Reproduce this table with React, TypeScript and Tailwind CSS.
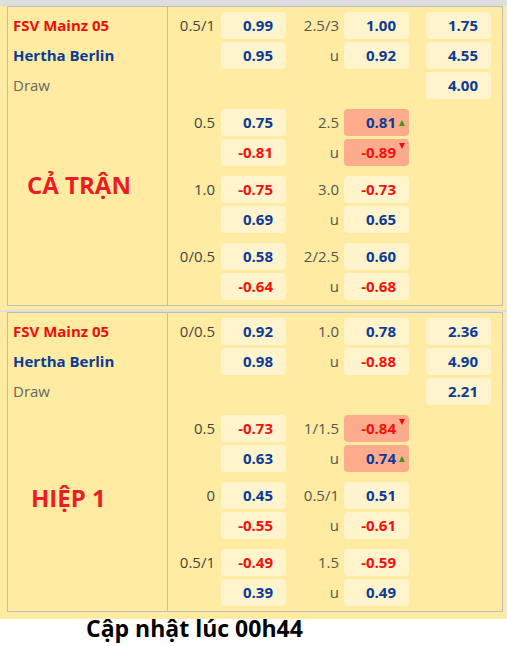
type Cell = { v: string; red?: boolean; hl?: boolean; arrow?: 'up' | 'down' };
type Row = { team?: { name: string; cls: string }; l1?: string; o1?: Cell; l2?: string; o2?: Cell; o3?: string };
type Section = { title: string; titleTop: string; groups: Row[][] };

const sections: Section[] = [
  {
    title: 'CẢ TRẬN',
    titleTop: 'mt-[70px] pl-[19px]',
    groups: [
      [
        { team: { name: 'FSV Mainz 05', cls: 'font-bold text-[#f20d0d]' }, l1: '0.5/1', o1: { v: '0.99' }, l2: '2.5/3', o2: { v: '1.00' }, o3: '1.75' },
        { team: { name: 'Hertha Berlin', cls: 'font-bold text-[#0b3b97]' }, o1: { v: '0.95' }, l2: 'u', o2: { v: '0.92' }, o3: '4.55' },
        { team: { name: 'Draw', cls: 'text-[#666]' }, o3: '4.00' },
      ],
      [
        { l1: '0.5', o1: { v: '0.75' }, l2: '2.5', o2: { v: '0.81', hl: true, arrow: 'up' } },
        { o1: { v: '-0.81', red: true }, l2: 'u', o2: { v: '-0.89', red: true, hl: true, arrow: 'down' } },
      ],
      [
        { l1: '1.0', o1: { v: '-0.75', red: true }, l2: '3.0', o2: { v: '-0.73', red: true } },
        { o1: { v: '0.69' }, l2: 'u', o2: { v: '0.65' } },
      ],
      [
        { l1: '0/0.5', o1: { v: '0.58' }, l2: '2/2.5', o2: { v: '0.60' } },
        { o1: { v: '-0.64', red: true }, l2: 'u', o2: { v: '-0.68', red: true } },
      ],
    ],
  },
  {
    title: 'HIỆP 1',
    titleTop: 'mt-[77px] pl-[23px]',
    groups: [
      [
        { team: { name: 'FSV Mainz 05', cls: 'font-bold text-[#f20d0d]' }, l1: '0/0.5', o1: { v: '0.92' }, l2: '1.0', o2: { v: '0.78' }, o3: '2.36' },
        { team: { name: 'Hertha Berlin', cls: 'font-bold text-[#0b3b97]' }, o1: { v: '0.98' }, l2: 'u', o2: { v: '-0.88', red: true }, o3: '4.90' },
        { team: { name: 'Draw', cls: 'text-[#666]' }, o3: '2.21' },
      ],
      [
        { l1: '0.5', o1: { v: '-0.73', red: true }, l2: '1/1.5', o2: { v: '-0.84', red: true, hl: true, arrow: 'down' } },
        { o1: { v: '0.63' }, l2: 'u', o2: { v: '0.74', hl: true, arrow: 'up' } },
      ],
      [
        { l1: '0', o1: { v: '0.45' }, l2: '0.5/1', o2: { v: '0.51' } },
        { o1: { v: '-0.55', red: true }, l2: 'u', o2: { v: '-0.61', red: true } },
      ],
      [
        { l1: '0.5/1', o1: { v: '-0.49', red: true }, l2: '1.5', o2: { v: '-0.59', red: true } },
        { o1: { v: '0.39' }, l2: 'u', o2: { v: '0.49' } },
      ],
    ],
  },
];

function Odd({ c }: { c?: Cell }) {
  if (!c) return <div className="w-[65px]" />;
  return (
    <div
      className={`relative w-[65px] h-full rounded-[4px] flex items-center justify-end pr-[13px] font-bold ${
        c.hl ? 'bg-[#fcab8c]' : 'bg-[#fff4cb]'
      } ${c.red ? 'text-[#f50f0f]' : 'text-[#0b3b97]'}`}
    >
      {c.v}
      {c.arrow === 'up' && (
        <span className="absolute right-[4px] top-[11px] w-0 h-0 border-l-[3px] border-r-[3px] border-b-[6px] border-l-transparent border-r-transparent border-b-[#3d9a1c]" />
      )}
      {c.arrow === 'down' && (
        <span className="absolute right-[4px] top-[4px] w-0 h-0 border-l-[3px] border-r-[3px] border-t-[6px] border-l-transparent border-r-transparent border-t-[#f20d0d]" />
      )}
    </div>
  );
}

function Table({ s }: { s: Section }) {
  const first = s.groups[0];
  return (
    <div className="ml-[7px] w-[496px] flex border border-[#bdbdbd]">
      <div className="w-[160px] border-r border-[#bdbdbd] pt-[5px]">
        <div className="flex flex-col gap-[3px] pl-[5px]">
          {first.map((r, i) => (
            <div key={i} className={`h-[27px] flex items-center ${r.team?.cls}`}>
              {r.team?.name}
            </div>
          ))}
        </div>
        <div className={`${s.titleTop} text-[24px] leading-[32px] font-bold text-[#ec1c24]`}>{s.title}</div>
      </div>
      <div className="flex-1 pt-[5px] pb-[5px] flex flex-col gap-[10px]">
        {s.groups.map((g, gi) => (
          <div key={gi} className="flex flex-col gap-[3px]">
            {g.map((r, ri) => (
              <div key={ri} className="h-[27px] flex items-center">
                <div className="w-[53px] text-right pr-[6px] text-[#444]">{r.l1}</div>
                <Odd c={r.o1} />
                <div className="w-[58px] text-right pr-[5px] text-[#555]">{r.l2}</div>
                <Odd c={r.o2} />
                <div className="ml-[17px] w-[65px] h-full">
                  {r.o3 && (
                    <div className="w-full h-full rounded-[4px] bg-[#fff4cb] flex items-center justify-end pr-[13px] font-bold text-[#0b3b97]">
                      {r.o3}
                    </div>
                  )}
                </div>
              </div>
            ))}
          </div>
        ))}
      </div>
    </div>
  );
}

export default function App() {
  return (
    <div className="w-[507px] h-[646px] bg-white text-[15px] font-['Open_Sans',_'Noto_Sans',sans-serif]">
      <div className="bg-[#ffeca2]">
        <div className="h-[6px] bg-[#dedede]" />
        <Table s={sections[0]} />
        <div className="h-[4px]" />
        <div className="h-[2px] bg-[#dedede]" />
        <Table s={sections[1]} />
        <div className="h-[7px]" />
      </div>
      <div className="-mt-[8px] pl-[86px] text-[23px] leading-[34px] font-bold text-black">Cập nhật lúc 00h44</div>
    </div>
  );
}
